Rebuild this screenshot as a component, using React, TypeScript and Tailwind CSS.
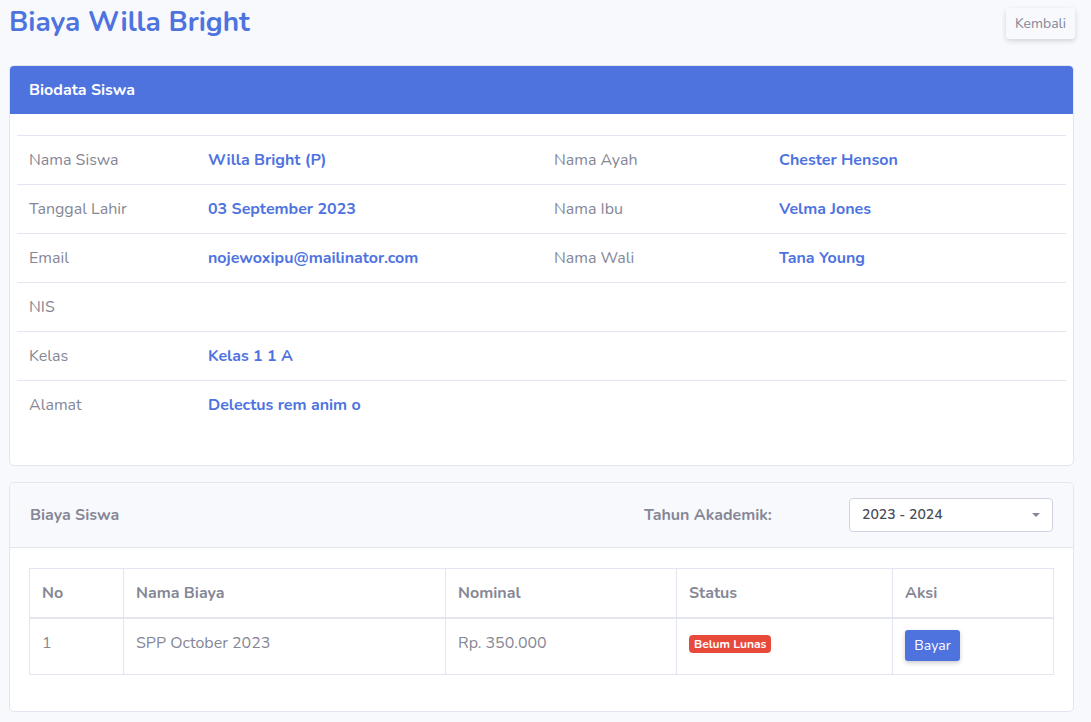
import React from "react";

const F = { fontFamily: '"Nunito", "Noto Sans", "Lato", sans-serif' };

function InfoRow({ l1, v1, l2, v2, last }: { l1: string; v1?: string; l2?: string; v2?: string; last?: boolean }) {
  return (
    <tr className={last ? "" : "border-b border-[#e3e6f0]"}>
      <td className="h-[49px] px-3 text-[16px] text-[#858796] w-[179px]">{l1}</td>
      <td className="px-3 text-[16px] font-bold text-[#4e73df] w-[346px]">{v1}</td>
      <td className="px-3 text-[16px] text-[#858796] w-[225px]">{l2}</td>
      <td className="px-3 text-[16px] font-bold text-[#4e73df]">{v2}</td>
    </tr>
  );
}

export default function App() {
  return (
    <div className="min-h-[722px] bg-[#f8f9fc] px-[9px] pt-[3px] pb-[10px]" style={F}>
      <div className="flex items-start justify-between">
        <h1 className="text-[28px] font-bold text-[#4e73df] leading-[38px]">Biaya Willa Bright</h1>
        <button className="mt-[5px] mr-[7px] h-[31px] rounded-[3px] bg-[#f8f9fc] px-[9px] text-[14px] text-[#858796] shadow-[0_2px_5px_rgba(58,59,69,0.2)]">
          Kembali
        </button>
      </div>

      <div className="mt-[24px] mr-[8px] rounded-[5px] border border-[#e3e6f0] bg-white overflow-hidden">
        <div className="h-[48px] flex items-center bg-[#4e73df] px-[19px] text-[16px] font-bold text-white">Biodata Siswa</div>
        <div className="px-[7px] pt-[21px] pb-[35px]">
          <table className="w-full border-collapse">
            <tbody className="border-t border-[#e3e6f0]">
              <InfoRow l1="Nama Siswa" v1="Willa Bright (P)" l2="Nama Ayah" v2="Chester Henson" />
              <InfoRow l1="Tanggal Lahir" v1="03 September 2023" l2="Nama Ibu" v2="Velma Jones" />
              <InfoRow l1="Email" v1="nojewoxipu@mailinator.com" l2="Nama Wali" v2="Tana Young" />
              <InfoRow l1="NIS" />
              <InfoRow l1="Kelas" v1="Kelas 1 1 A" />
              <InfoRow l1="Alamat" v1="Delectus rem anim o" last />
            </tbody>
          </table>
        </div>
      </div>

      <div className="mt-[16px] mr-[8px] rounded-[5px] border border-[#e3e6f0] bg-white overflow-hidden">
        <div className="h-[65px] flex items-center bg-[#f8f9fc] border-b border-[#e3e6f0] pl-[20px] pr-[20px]">
          <div className="flex-1 text-[16px] font-bold text-[#858796]">Biaya Siswa</div>
          <div className="w-[205px] text-[16px] font-bold text-[#858796]">Tahun Akademik:</div>
          <div className="w-[204px] h-[34px] flex items-center justify-between rounded-[4px] border border-[#d1d3e2] bg-white pl-[12px] pr-[12px]">
            <span className="text-[14px] font-semibold text-[#4a4b57]">2023 - 2024</span>
            <svg width="8" height="4" viewBox="0 0 8 4"><path d="M0 0 L8 0 L4 4 Z" fill="#858796" /></svg>
          </div>
        </div>
        <div className="px-[19px] pt-[20px] pb-[36px]">
          <table className="w-full border-collapse border border-[#e3e6f0]">
            <thead>
              <tr className="border-b-2 border-[#e3e6f0] text-[16px] font-bold text-[#858796] text-left">
                <th className="h-[50px] px-3 border-r border-[#e3e6f0] w-[94px] font-bold">No</th>
                <th className="px-3 border-r border-[#e3e6f0] w-[322px] font-bold">Nama Biaya</th>
                <th className="px-3 border-r border-[#e3e6f0] w-[231px] font-bold">Nominal</th>
                <th className="px-3 border-r border-[#e3e6f0] w-[216px] font-bold">Status</th>
                <th className="px-3 font-bold">Aksi</th>
              </tr>
            </thead>
            <tbody>
              <tr className="text-[16px] text-[#858796]">
                <td className="h-[56px] px-3 border-r border-[#e3e6f0] align-top pt-[12px]">1</td>
                <td className="px-3 border-r border-[#e3e6f0] align-top pt-[12px]">SPP October 2023</td>
                <td className="px-3 border-r border-[#e3e6f0] align-top pt-[12px]">Rp. 350.000</td>
                <td className="px-3 border-r border-[#e3e6f0] align-top pt-[12px]">
                  <span className="inline-block rounded-[4px] bg-[#e74a3b] px-[5px] py-[0px] text-[12px] font-bold text-white leading-[18px]">Belum Lunas</span>
                </td>
                <td className="px-3 align-top pt-[11px]">
                  <button className="h-[31px] w-[55px] rounded-[3px] bg-[#4e73df] text-[14px] text-white shadow-[0_2px_4px_rgba(58,59,69,0.25)]">Bayar</button>
                </td>
              </tr>
            </tbody>
          </table>
        </div>
      </div>
    </div>
  );
}
